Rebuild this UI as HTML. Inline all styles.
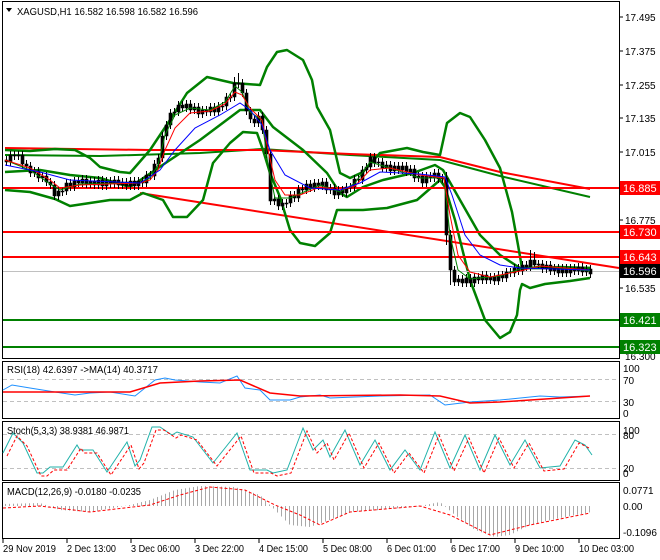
<!DOCTYPE html>
<html><head><meta charset="utf-8">
<style>
html,body{margin:0;padding:0;background:#fff;}
svg{display:block;font-family:"Liberation Sans","DejaVu Sans",sans-serif;font-size:10px;}
</style></head>
<body>
<svg width="660" height="560" viewBox="0 0 660 560" xmlns="http://www.w3.org/2000/svg">
<defs>
<pattern id="hp" width="4" height="4" patternUnits="userSpaceOnUse"><rect x="1" y="0" width="1" height="4" fill="#a8a8a8"/></pattern>
</defs>
<rect width="660" height="560" fill="#fff"/>
<polyline fill="none" stroke="#008000" stroke-width="2" points="5,155 100,156 200,153 262,149 350,155 440,160 500,176 590,197"/>
<polyline fill="none" stroke="#ff0000" stroke-width="2" points="5,148 150,150 260,150 350,154 440,157 500,172 590,189"/>
<polyline fill="none" stroke="#ff0000" stroke-width="2" points="140,193 619,268"/>
<polyline fill="none" stroke="#008000" stroke-width="2.5" stroke-linejoin="round" points="5,150 30,151 55,149 75,150 90,158 100,167 120,172 130,173 150,150 170,120 187,93 207,77 233,83 260,85 267,67 277,52 287,50 303,60 312,80 317,107 330,130 340,173 350,178 363,172 380,153 407,148 423,152 440,155 447,123 460,113 470,117 485,140 500,168 512,212 518,245 522,268 540,268 560,267 590,268"/>
<polyline fill="none" stroke="#008000" stroke-width="2.5" stroke-linejoin="round" points="5,190 30,192 55,199 70,206 90,203 110,200 130,200 143,193 163,200 173,217 187,217 203,200 213,163 230,143 243,132 257,133 263,150 270,173 280,197 290,230 300,243 315,246 330,233 337,210 363,210 387,208 417,200 440,180 445,187 455,220 470,280 485,320 500,338 510,332 517,315 520,290 522,284 530,288 545,284 570,281 590,278"/>
<polyline fill="none" stroke="#008000" stroke-width="2.5" stroke-linejoin="round" points="5,172 40,170 70,175 100,178 130,187 170,160 200,140 240,110 260,110 273,127 303,150 327,173 340,193 347,197 363,187 383,180 413,173 435,165 443,170 460,200 480,235 500,255 520,268 560,268 590,268"/>
<line x1="3" x2="619" y1="271.5" y2="271.5" stroke="#c0c0c0"/>
<g stroke="#ff0000" stroke-width="2">
<line x1="3" x2="619" y1="188" y2="188"/>
<line x1="3" x2="619" y1="232" y2="232"/>
<line x1="3" x2="619" y1="257" y2="257"/>
</g>
<g stroke="#008000" stroke-width="2">
<line x1="3" x2="619" y1="320" y2="320"/>
<line x1="3" x2="619" y1="347" y2="347"/>
</g>
<path fill="none" stroke="#000" stroke-width="1" d="M6.5 156V166M10.5 151V166M14.5 151V160M18.5 151V160M22.5 151V168M26.5 160V170M30.5 162V177M34.5 167V177M38.5 167V182M42.5 172V182M46.5 172V186M50.5 178V189M54.5 181V200M58.5 187V200M62.5 187V196M66.5 179V195M70.5 179V191M74.5 177V191M78.5 177V187M82.5 175V187M86.5 175V188M90.5 177V188M94.5 177V189M98.5 176V189M102.5 176V190M106.5 177V190M110.5 177V188M114.5 176V188M118.5 176V189M122.5 178V189M126.5 178V190M130.5 177V190M134.5 177V190M138.5 177V190M142.5 177V187M146.5 171V187M150.5 171V180M154.5 160V180M158.5 154V168M162.5 132V162M166.5 121V140M170.5 109V129M174.5 108V117M178.5 101V116M182.5 101V112M186.5 100V112M190.5 100V114M194.5 103V114M198.5 103V118M202.5 106V118M206.5 106V116M210.5 103V116M214.5 103V116M218.5 102V116M222.5 102V111M226.5 93V110M230.5 93V102M234.5 77V101M238.5 73V88M242.5 79V97M246.5 89V115M250.5 107V123M254.5 115V127M258.5 112V127M262.5 112V134M266.5 126V158M270.5 150V205M274.5 195V205M278.5 195V210M282.5 199V210M286.5 199V208M290.5 191V207M294.5 191V202M298.5 185V202M302.5 185V194M306.5 180V194M310.5 180V192M314.5 179V192M318.5 179V190M322.5 178V190M326.5 178V194M330.5 184V194M334.5 184V199M338.5 186V199M342.5 186V197M346.5 183V197M350.5 183V192M354.5 175V191M358.5 175V184M362.5 166V184M366.5 163V174M370.5 153V171M374.5 153V167M378.5 158V167M382.5 158V172M386.5 161V172M390.5 161V175M394.5 162V175M398.5 162V174M402.5 162V174M406.5 162V176M410.5 165V176M414.5 165V182M418.5 172V182M422.5 172V187M426.5 172V187M430.5 172V182M434.5 169V182M438.5 169V183M442.5 174V183M446.5 172V245M450.5 230V285M454.5 266V286M458.5 275V286M462.5 275V287M466.5 274V287M470.5 274V287M474.5 273V287M478.5 273V284M482.5 271V284M486.5 271V284M490.5 273V284M494.5 273V285M498.5 271V285M502.5 271V282M506.5 268V282M510.5 268V277M514.5 264V277M518.5 264V275M522.5 261V275M526.5 261V271M530.5 250V271M534.5 252V269M538.5 260V269M542.5 260V273M546.5 261V273M550.5 261V275M554.5 264V275M558.5 264V277M562.5 264V277M566.5 264V277M570.5 264V277M574.5 264V275M578.5 263V275M582.5 263V276M586.5 265V276M590.5 265V278"/>
<path fill="#000" stroke="#000" stroke-width="0.6" d="M5 160h3V162h-3zM9 155h3V162h-3zM13 155h3V156h-3zM17 155h3V156h-3zM21 155h3V164h-3zM25 164h3V166h-3zM29 166h3V173h-3zM33 171h3V173h-3zM37 171h3V178h-3zM41 176h3V178h-3zM45 176h3V182h-3zM49 182h3V185h-3zM53 185h3V196h-3zM57 191h3V196h-3zM61 191h3V192h-3zM65 183h3V191h-3zM69 183h3V187h-3zM73 181h3V187h-3zM77 181h3V183h-3zM81 179h3V183h-3zM85 179h3V184h-3zM89 181h3V184h-3zM93 181h3V185h-3zM97 180h3V185h-3zM101 180h3V186h-3zM105 181h3V186h-3zM109 181h3V184h-3zM113 180h3V184h-3zM117 180h3V185h-3zM121 182h3V185h-3zM125 182h3V186h-3zM129 181h3V186h-3zM133 181h3V186h-3zM137 181h3V186h-3zM141 181h3V183h-3zM145 175h3V183h-3zM149 175h3V176h-3zM153 164h3V176h-3zM157 158h3V164h-3zM161 136h3V158h-3zM165 125h3V136h-3zM169 113h3V125h-3zM173 112h3V113h-3zM177 105h3V112h-3zM181 105h3V108h-3zM185 104h3V108h-3zM189 104h3V110h-3zM193 107h3V110h-3zM197 107h3V114h-3zM201 110h3V114h-3zM205 110h3V112h-3zM209 107h3V112h-3zM213 107h3V112h-3zM217 106h3V112h-3zM221 106h3V107h-3zM225 97h3V106h-3zM229 97h3V98h-3zM233 83h3V97h-3zM237 83h3V84h-3zM241 83h3V93h-3zM245 93h3V111h-3zM249 111h3V119h-3zM253 119h3V123h-3zM257 116h3V123h-3zM261 116h3V130h-3zM265 130h3V154h-3zM269 154h3V201h-3zM273 199h3V201h-3zM277 199h3V206h-3zM281 203h3V206h-3zM285 203h3V204h-3zM289 195h3V203h-3zM293 195h3V198h-3zM297 189h3V198h-3zM301 189h3V190h-3zM305 184h3V190h-3zM309 184h3V188h-3zM313 183h3V188h-3zM317 183h3V186h-3zM321 182h3V186h-3zM325 182h3V190h-3zM329 188h3V190h-3zM333 188h3V195h-3zM337 190h3V195h-3zM341 190h3V193h-3zM345 187h3V193h-3zM349 187h3V188h-3zM353 179h3V187h-3zM357 179h3V180h-3zM361 170h3V180h-3zM365 167h3V170h-3zM369 157h3V167h-3zM373 157h3V163h-3zM377 162h3V163h-3zM381 162h3V168h-3zM385 165h3V168h-3zM389 165h3V171h-3zM393 166h3V171h-3zM397 166h3V170h-3zM401 166h3V170h-3zM405 166h3V172h-3zM409 169h3V172h-3zM413 169h3V178h-3zM417 176h3V178h-3zM421 176h3V183h-3zM425 176h3V183h-3zM429 176h3V178h-3zM433 173h3V178h-3zM437 173h3V179h-3zM441 178h3V179h-3zM445 178h3V235h-3zM449 235h3V270h-3zM453 270h3V282h-3zM457 279h3V282h-3zM461 279h3V283h-3zM465 278h3V283h-3zM469 278h3V283h-3zM473 277h3V283h-3zM477 277h3V280h-3zM481 275h3V280h-3zM485 275h3V280h-3zM489 277h3V280h-3zM493 277h3V281h-3zM497 275h3V281h-3zM501 275h3V278h-3zM505 272h3V278h-3zM509 272h3V273h-3zM513 268h3V273h-3zM517 268h3V271h-3zM521 265h3V271h-3zM525 265h3V267h-3zM529 260h3V267h-3zM533 260h3V265h-3zM537 264h3V265h-3zM541 264h3V269h-3zM545 265h3V269h-3zM549 265h3V271h-3zM553 268h3V271h-3zM557 268h3V273h-3zM561 268h3V273h-3zM565 268h3V273h-3zM569 268h3V273h-3zM573 268h3V271h-3zM577 267h3V271h-3zM581 267h3V272h-3zM585 269h3V272h-3zM589 269h3V274h-3z"/>
<polyline fill="none" stroke="#008000" stroke-width="1" points="5,160 30,170 50,184 60,190 80,184 140,183 150,178 158,165 165,135 175,115 190,108 210,110 225,102 235,86 242,92 250,112 262,120 268,165 275,198 290,198 320,185 340,192 355,183 370,162 390,168 420,178 444,178 450,235 458,270 470,279 500,276 520,269 540,266 590,271"/>
<polyline fill="none" stroke="#ff0000" stroke-width="1" points="5,160 30,168 50,180 60,188 80,185 140,183 150,180 158,170 165,150 175,128 190,113 210,111 225,104 235,92 242,95 250,108 262,120 268,150 275,180 285,195 300,195 320,187 340,190 355,186 370,170 390,168 420,175 444,178 450,215 458,255 470,272 490,277 520,271 540,266 590,270"/>
<polyline fill="none" stroke="#0000ff" stroke-width="1" points="5,165 40,172 70,180 140,183 160,170 175,150 195,128 220,115 240,103 250,110 262,125 270,150 285,175 310,188 340,190 360,183 380,172 420,174 445,177 452,195 465,235 480,255 500,265 520,268 590,270"/>
<g fill="none" stroke="#000" stroke-width="1">
<rect x="2.5" y="1.5" width="617" height="357"/>
<rect x="2.5" y="361.5" width="617" height="57"/>
<rect x="2.5" y="421.5" width="617" height="59"/>
<rect x="2.5" y="482.5" width="617" height="56"/>
</g>
<path d="M6 8 L12 8 L9 12 Z" fill="#000"/>
<text x="17" y="15" fill="#000" textLength="181" lengthAdjust="spacingAndGlyphs">XAGUSD,H1  16.582 16.598 16.582 16.596</text>
<g fill="#000">
<text x="625" y="21">17.495</text>
<text x="625" y="55">17.375</text>
<text x="625" y="89">17.255</text>
<text x="625" y="122">17.135</text>
<text x="625" y="156">17.015</text>
<text x="625" y="224">16.775</text>
<text x="625" y="292">16.535</text>
<text x="625" y="360">16.300</text>
</g>
<g stroke="#000"><line x1="619" x2="623" y1="17" y2="17"/><line x1="619" x2="623" y1="51" y2="51"/><line x1="619" x2="623" y1="85" y2="85"/><line x1="619" x2="623" y1="118" y2="118"/><line x1="619" x2="623" y1="152" y2="152"/><line x1="619" x2="623" y1="220" y2="220"/><line x1="619" x2="623" y1="288" y2="288"/></g>
<g font-size="11">
<rect x="620" y="181" width="40" height="14" fill="#ff0000"/><text x="623" y="192" fill="#fff">16.885</text>
<rect x="620" y="225" width="40" height="14" fill="#ff0000"/><text x="623" y="236" fill="#fff">16.730</text>
<rect x="620" y="250" width="40" height="14" fill="#ff0000"/><text x="623" y="261" fill="#fff">16.643</text>
<rect x="620" y="264" width="40" height="14" fill="#000"/><text x="623" y="275" fill="#fff">16.596</text>
<rect x="620" y="313" width="40" height="14" fill="#008000"/><text x="623" y="324" fill="#fff">16.421</text>
<rect x="620" y="340" width="40" height="14" fill="#008000"/><text x="623" y="351" fill="#fff">16.323</text>
</g>
<g stroke="#c0c0c0" stroke-dasharray="4,3"><line x1="3" x2="619" y1="379.5" y2="379.5"/><line x1="3" x2="619" y1="401.5" y2="401.5"/>
<line x1="3" x2="619" y1="434.5" y2="434.5"/><line x1="3" x2="619" y1="468.5" y2="468.5"/></g>
<polyline fill="none" stroke="#1e90ff" stroke-width="1" points="3,390 12,385 30,388 55,392 75,395 90,393 110,392 135,396 145,388 155,380 165,378 175,380 200,382 220,383 237,376 245,388 260,390 270,400 290,400 300,397 320,395 330,398 380,396 430,395 445,405 470,402 500,400 540,396 560,397 590,396"/>
<polyline fill="none" stroke="#ff0000" stroke-width="1.5" points="3,392 50,392 130,392 160,383 200,381 240,380 270,393 300,396 400,395 440,396 470,403 500,402 590,396"/>
<polyline fill="none" stroke="#20b2aa" stroke-width="1" points="3,453 13,433 23,443 37,473 43,473 50,467 63,467 77,445 80,450 93,450 107,472 127,442 135,466 140,460 152,427 160,427 172,435 177,432 193,437 213,463 237,433 250,470 267,470 273,473 287,470 303,428 313,450 323,440 330,457 345,430 360,465 375,440 390,470 405,450 420,470 435,432 450,468 465,435 480,470 495,435 510,465 525,440 540,468 560,466 575,440 585,445 592,455"/>
<polyline fill="none" stroke="#ff0000" stroke-width="1" stroke-dasharray="3,2" points="7,456 17,436 27,446 41,476 47,476 54,470 67,470 81,448 84,453 97,453 111,475 131,445 139,469 144,463 156,430 164,430 176,438 181,435 197,440 217,466 241,436 254,473 271,473 277,476 291,473 307,431 317,453 327,443 334,460 349,433 364,468 379,443 394,473 409,453 424,473 439,435 454,471 469,438 484,473 499,438 514,468 529,443 544,471 564,469 579,443 589,448"/>
<polygon fill="url(#hp)" points="3,506 3,504 40,503 60,510 90,512 130,505 150,500 175,490 200,486 235,487 260,495 275,510 290,525 310,527 330,520 350,512 380,510 420,506 440,502 455,515 475,530 495,537 510,535 530,525 560,518 592,512 592,506"/>
<polyline fill="none" stroke="#ff0000" stroke-width="1" stroke-dasharray="3,2" points="3,508 40,506 90,512 150,505 180,495 210,487 245,490 275,505 300,515 320,525 350,512 420,506 450,515 490,535 530,525 590,513"/>
<text x="7" y="373" fill="#000" textLength="151" lengthAdjust="spacingAndGlyphs">RSI(18) 42.6397  -&gt;MA(14) 40.3717</text>
<text x="7" y="434" fill="#000" textLength="122" lengthAdjust="spacingAndGlyphs">Stoch(5,3,3) 38.9381 46.9871</text>
<text x="7" y="495" fill="#000" textLength="134" lengthAdjust="spacingAndGlyphs">MACD(12,26,9) -0.0180 -0.0235</text>
<g fill="#000"><text x="623" y="372">100</text><text x="623" y="384">70</text><text x="623" y="406">30</text><text x="623" y="417">0</text>
<text x="623" y="434">100</text><text x="623" y="439">80</text><text x="623" y="472">20</text><text x="623" y="477">0</text>
<text x="623" y="494">0.0771</text><text x="623" y="510">0.00</text><text x="623" y="536">-0.1096</text></g>
<g fill="#000">
<text x="3" y="552" textLength="53" lengthAdjust="spacingAndGlyphs">29 Nov 2019</text>
<text x="67" y="552" textLength="49" lengthAdjust="spacingAndGlyphs">2 Dec 13:00</text>
<text x="131" y="552" textLength="49" lengthAdjust="spacingAndGlyphs">3 Dec 06:00</text>
<text x="195" y="552" textLength="49" lengthAdjust="spacingAndGlyphs">3 Dec 22:00</text>
<text x="259" y="552" textLength="49" lengthAdjust="spacingAndGlyphs">4 Dec 15:00</text>
<text x="323" y="552" textLength="49" lengthAdjust="spacingAndGlyphs">5 Dec 08:00</text>
<text x="387" y="552" textLength="49" lengthAdjust="spacingAndGlyphs">6 Dec 01:00</text>
<text x="451" y="552" textLength="49" lengthAdjust="spacingAndGlyphs">6 Dec 17:00</text>
<text x="515" y="552" textLength="49" lengthAdjust="spacingAndGlyphs">9 Dec 10:00</text>
<text x="579" y="552" textLength="55" lengthAdjust="spacingAndGlyphs">10 Dec 03:00</text>
</g>
<g stroke="#000"><line x1="3" x2="3" y1="539" y2="543"/><line x1="67" x2="67" y1="539" y2="543"/><line x1="131" x2="131" y1="539" y2="543"/><line x1="195" x2="195" y1="539" y2="543"/><line x1="259" x2="259" y1="539" y2="543"/><line x1="323" x2="323" y1="539" y2="543"/><line x1="387" x2="387" y1="539" y2="543"/><line x1="451" x2="451" y1="539" y2="543"/><line x1="515" x2="515" y1="539" y2="543"/><line x1="579" x2="579" y1="539" y2="543"/></g>
</svg>
</body></html>
